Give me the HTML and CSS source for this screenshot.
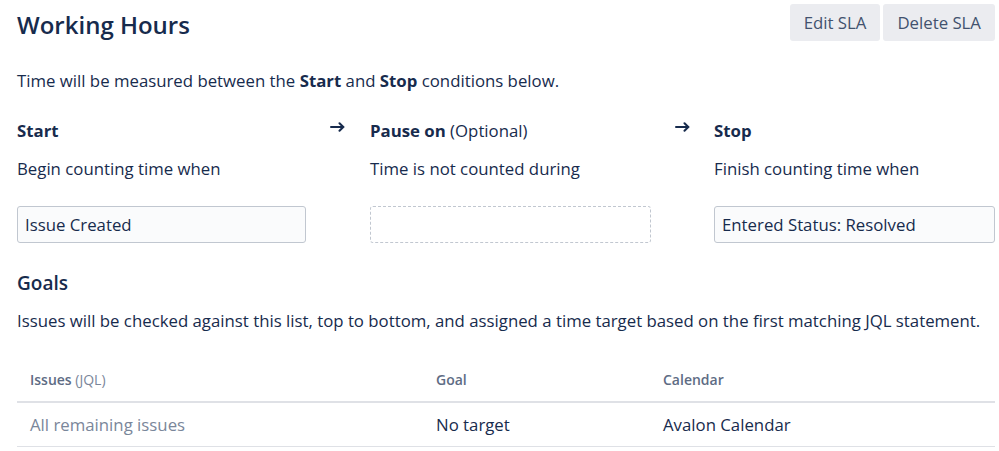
FILE: index.html
```html
<!DOCTYPE html>
<html>
<head>
<meta charset="utf-8">
<link rel="stylesheet" href="styles.css">
</head>
<body>
<div class="page">
  <div class="header">
    <h1 class="title">Working Hours</h1>
    <div class="actions">
      <button class="btn">Edit SLA</button>
      <button class="btn">Delete SLA</button>
    </div>
  </div>
  <p class="intro">Time will be measured between the <b>Start</b> and <b>Stop</b> conditions below.</p>
  <div class="conditions">
    <div class="cond">
      <div class="cond-title"><b>Start</b></div>
      <div class="cond-sub">Begin counting time when</div>
      <div class="field">Issue Created</div>
    </div>
    <div class="arrow"><svg width="16" height="10" viewBox="0 0 16 10"><path d="M1 5h12.5M9.5 1.2l3.8 3.8-3.8 3.8" fill="none" stroke="#172b4d" stroke-width="2" stroke-linecap="round" stroke-linejoin="round"/></svg></div>
    <div class="cond">
      <div class="cond-title"><b>Pause on</b> (Optional)</div>
      <div class="cond-sub">Time is not counted during</div>
      <div class="field empty"></div>
    </div>
    <div class="arrow"><svg width="16" height="10" viewBox="0 0 16 10"><path d="M1 5h12.5M9.5 1.2l3.8 3.8-3.8 3.8" fill="none" stroke="#172b4d" stroke-width="2" stroke-linecap="round" stroke-linejoin="round"/></svg></div>
    <div class="cond">
      <div class="cond-title"><b>Stop</b></div>
      <div class="cond-sub">Finish counting time when</div>
      <div class="field">Entered Status: Resolved</div>
    </div>
  </div>
  <h2 class="goals-title">Goals</h2>
  <p class="goals-desc">Issues will be checked against this list, top to bottom, and assigned a time target based on the first matching JQL statement.</p>
  <div class="table">
    <div class="th">Issues <span class="muted">(JQL)</span></div>
    <div class="th">Goal</div>
    <div class="th">Calendar</div>
    <div class="td light">All remaining issues</div>
    <div class="td">No target</div>
    <div class="td">Avalon Calendar</div>
  </div>
</div>
</body>
</html>
```
FILE: styles.css
```css
* { box-sizing: border-box; }
html, body { margin: 0; padding: 0; background: #fff; }
body {
  font-family: "Open Sans", "Noto Sans", sans-serif;
  font-size: 16.8px;
  line-height: 24px;
  color: #172b4d;
}
.page { padding: 4px 4px 0 17px; }
.header { display: flex; justify-content: space-between; align-items: flex-start; height: 37px; }
.title { margin: 0; padding-top: 2px; font-size: 24px; font-weight: 600; line-height: 37px; }
.actions { display: flex; gap: 3px; }
.btn {
  font: inherit;
  height: 37px;
  padding: 0 14px;
  border: none;
  border-radius: 3px;
  background: #ebecf0;
  color: #42526e;
}
.intro { margin: 28px 0 0; }
.intro b, .cond-title b { font-weight: 700; }
.conditions {
  display: grid;
  grid-template-columns: 289px 64px 281px 63px 1fr;
  margin-top: 26px;
}
.cond-sub { margin-top: 14px; }
.field {
  margin-top: 25px;
  height: 37px;
  border: 1px solid #c1c7d0;
  border-radius: 3px;
  background: #fafbfc;
  padding: 6px 7px;
}
.field.empty { border-style: dashed; background: #fff; }
.arrow { display: flex; justify-content: center; padding-top: 3px; }
.arrow svg { display: block; }
.goals-title { margin: 28px 0 0; font-size: 19px; font-weight: 600; line-height: 24px; }
.goals-desc { margin: 14px 0 0; }
.table {
  display: grid;
  grid-template-columns: 406px 227px 1fr;
  margin-top: 37px;
}
.th {
  font-size: 14px;
  line-height: 20px;
  font-weight: 600;
  color: #5e6c84;
  padding: 0 0 11px 13px;
  border-bottom: 2px solid #dfe1e6;
}
.th .muted { font-weight: 400; color: #7a869a; }
.td {
  padding: 10px 0 9px 13px;
  border-bottom: 1px solid #dfe1e6;
}
.td.light { color: #7a869a; }
```
